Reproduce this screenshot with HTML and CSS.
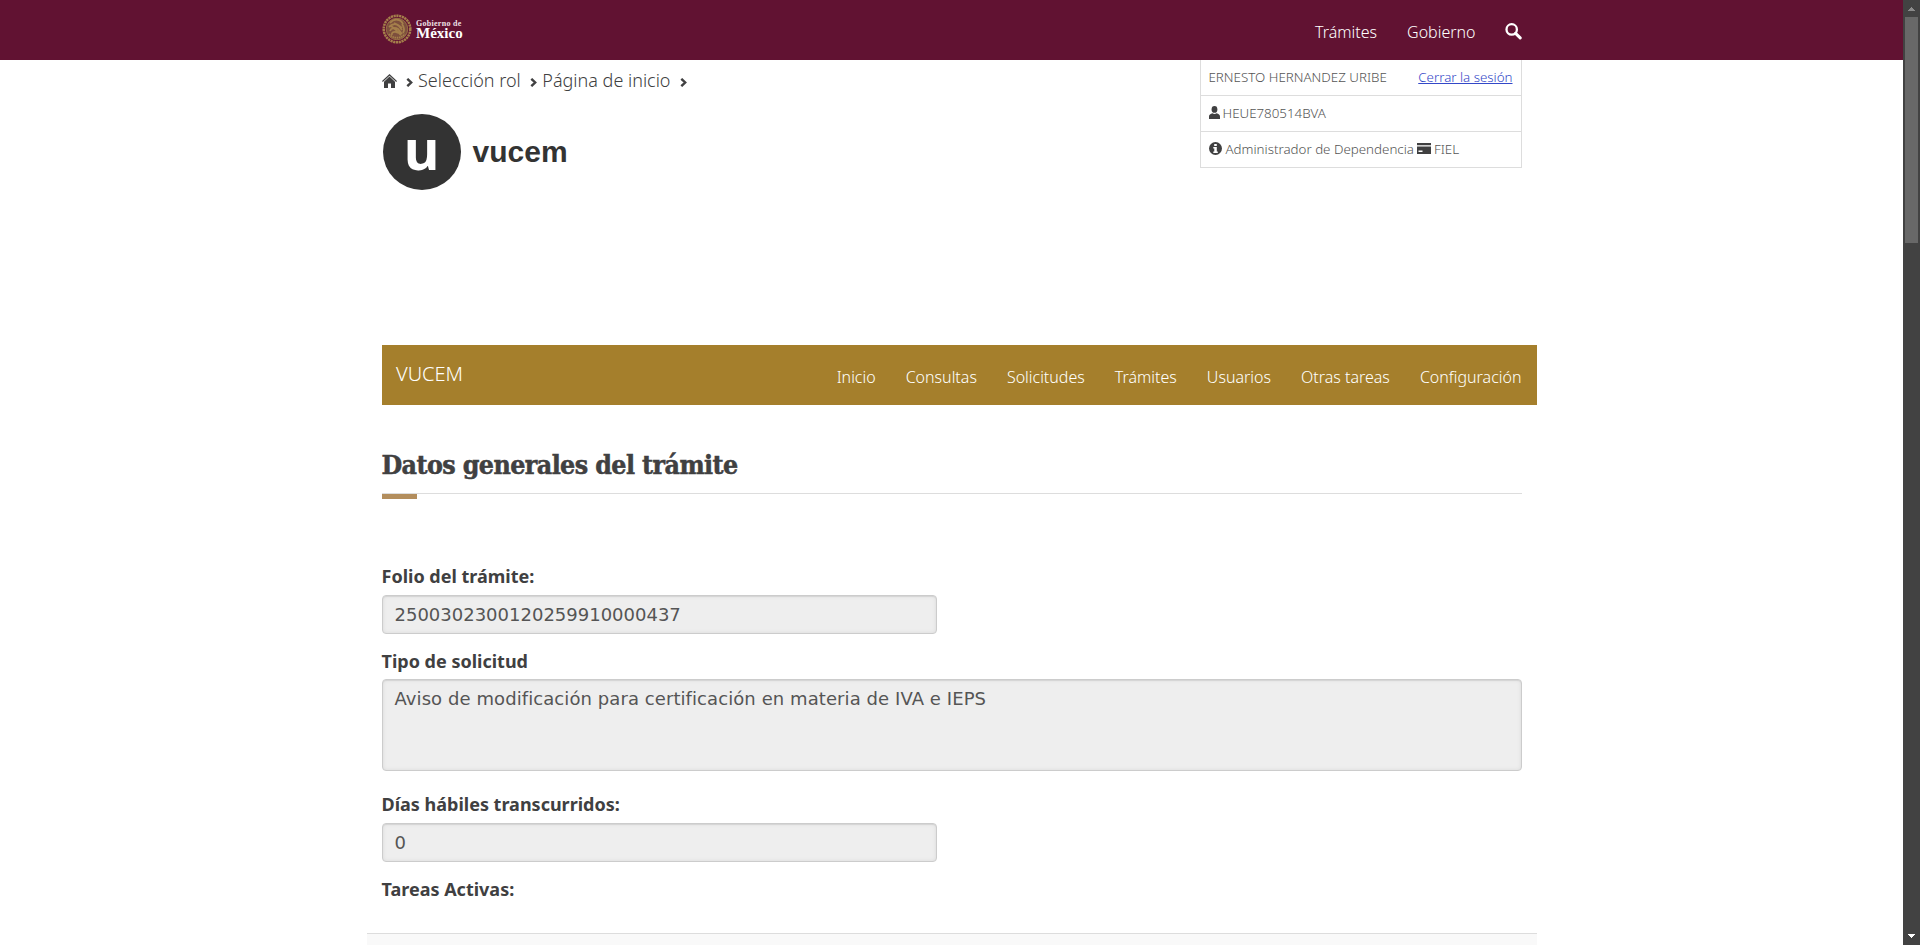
FILE: index.html
```html
<!DOCTYPE html>
<html lang="es">
<head>
<meta charset="utf-8">
<title>VUCEM</title>
<link rel="stylesheet" href="styles.css">
</head>
<body>
<div class="window">
<div class="page">
  <header class="topbar">
    <div class="container topbar-inner">
      <div class="gob">
        <svg class="crest" viewBox="0 0 30 30" fill="none" stroke="#a57f4b">
          <circle cx="15" cy="15" r="13.300" stroke-width="2.500" stroke-dasharray="2.200 .6"/>
          <circle cx="15" cy="15" r="10.800" fill="#7d4f3d" stroke-width=".7"/>
          <path d="M8 9c4-5 11-4 13 1M7 13c3-3 7-4 10-1l3 4M8 17c1-3 5-4 8-2l4 5M10 21c-1-3 3-4 6-2M12 9l4 2 4 3M9 12l5 4 5 5M20 10c2 3 3 6 1 9" stroke-width="1.800"/>
          <path d="M7 20c4 5 12 5 16 0" stroke-width="1.800" stroke-dasharray="1.500 .7"/>
        </svg>
        <div class="gob-text"><span class="gob-small">Gobierno de</span><span class="gob-big">México</span></div>
      </div>
      <nav class="topnav">
        <a class="tn1">Trámites</a><a class="tn2">Gobierno</a>
        <svg class="search" viewBox="0 0 17 17" fill="none" stroke="#fff"><circle cx="6.700" cy="6.400" r="5.200" stroke-width="2.300"/><path d="M10.600 10.400l4.600 4.500" stroke-width="3" stroke-linecap="round"/></svg>
      </nav>
    </div>
  </header>

  <main class="container">
    <div class="intro">
      <div class="left">
        <div class="crumbs">
          <svg class="home" viewBox="0 0 15 14" fill="#404041"><path d="M7.500 0L0 7l.8.9L7.500 1.700l6.700 6.200.8-.9z"/><path d="M7.500 2.600L2 7.700V14h4v-4.400h3V14h4V7.700z"/></svg>
          <svg class="chev" viewBox="0 0 7 9"><path d="M1.300 .8l3.900 3.700L1.300 8.200"/></svg>
          <a class="c1">Selección rol</a>
          <svg class="chev" viewBox="0 0 7 9"><path d="M1.300 .8l3.900 3.700L1.300 8.200"/></svg>
          <a class="c2">Página de inicio</a>
          <svg class="chev" viewBox="0 0 7 9"><path d="M1.300 .8l3.900 3.700L1.300 8.200"/></svg>
        </div>
        <div class="logo"><span class="disc"><span>u</span></span><span class="word">vucem</span></div>
      </div>
      <aside class="user">
        <div class="urow first"><span class="uname">ERNESTO HERNANDEZ URIBE</span><a class="logout">Cerrar la sesión</a></div>
        <div class="urow">
          <svg class="person" viewBox="0 0 11 13" fill="#404041"><ellipse cx="5.500" cy="3.400" rx="2.900" ry="3.400"/><path d="M0 13v-2.600C0 8.500 1.500 8 3.400 7.200c1.300 1 2.900 1 4.200 0C9.500 8 11 8.500 11 10.400V13z"/></svg>
          <span>HEUE780514BVA</span></div>
        <div class="urow">
          <svg class="info" viewBox="0 0 13 13"><circle cx="6.500" cy="6.500" r="6.500" fill="#404041"/><path d="M5.200 1.900h2.600v2H5.200zM4.300 5h3.500v4.600h1v1.500H4.300V9.600h1V6.500h-1z" fill="#fff"/></svg>
          <span class="admin">Administrador de Dependencia</span>
          <svg class="card" viewBox="0 0 14 11"><path d="M0 0h14v11H0z" fill="#404041"/><path d="M0 2.200h14v1.300H0zM1.500 7.500h4v1.500h-4z" fill="#fff"/></svg>
          <span>FIEL</span></div>
      </aside>
    </div>

    <nav class="menu">
      <span class="brand">VUCEM</span>
      <div class="links"><a>Inicio</a><a>Consultas</a><a>Solicitudes</a><a>Trámites</a><a>Usuarios</a><a>Otras tareas</a><a>Configuración</a></div>
    </nav>

    <h1 class="title"><span>Datos generales del trámite</span></h1>

    <form class="form">
      <label>Folio del trámite:</label>
      <div class="field">2500302300120259910000437</div>
      <label>Tipo de solicitud</label>
      <div class="field area">Aviso de modificación para certificación en materia de IVA e IEPS</div>
      <label>Días hábiles transcurridos:</label>
      <div class="field">0</div>
      <label>Tareas Activas:</label>
    </form>
    <div class="panel"></div>
  </main>
</div>
<div class="scrollbar">
  <svg class="arrow" viewBox="0 0 7 4" fill="#8a8a8a" shape-rendering="crispEdges"><path d="M0 4h7V3H6V2H5V1H4V0H3v1H2v1H1v1H0z"/></svg>
  <div class="thumb"></div>
  <svg class="arrow down" viewBox="0 0 7 4" fill="#fff" shape-rendering="crispEdges"><path d="M0 0h7v1H6v1H5v1H4v1H3V3H2V2H1V1H0z"/></svg>
</div>
</div>
</body>
</html>
```
FILE: styles.css
```css
* { box-sizing: border-box; }
body { margin: 0; background: #fff; color: #404041; font: 300 16px/24px "Noto Sans", "Open Sans", sans-serif; }
svg { display: block; flex: none; }
a, span { white-space: nowrap; }
.window { display: flex; height: 945px; overflow: hidden; }
.page { width: 1903px; height: 945px; overflow: hidden; }
.container { width: 1170px; margin: 0 auto; padding: 0 15px; }
.topbar { height: 60px; background: #611232; color: #fff; }
.topbar-inner { display: flex; justify-content: space-between; }
.gob { display: flex; padding-top: 14px; }
.crest { width: 30px; height: 30px; }
.gob-text { display: flex; flex-direction: column; margin: 5px 0 0 4.500px; font-family: "Liberation Serif", serif; }
.gob-small { font-size: 8px; line-height: 9px; font-weight: 700; letter-spacing: .28px; color: #eee0e5; }
.gob-big { font-size: 15px; line-height: 10px; font-weight: 700; }
.topnav { display: flex; padding-top: 20px; }
.tn2 { margin-left: 30px; }
.search { width: 17px; height: 17px; margin: 3px 0 0 29px; }
.intro { display: flex; justify-content: space-between; height: 285px; }
.crumbs { display: flex; height: 42px; padding-top: 7px; font-size: 18px; line-height: 27px; }
.home { width: 15px; height: 14px; margin-top: 7px; }
.chev { width: 7px; height: 9px; margin: 11px 5px 0 9.500px; fill: none; stroke: #404041; stroke-width: 2.400; }
.logo { display: flex; align-items: center; margin: 11px 0 0 1px; height: 77px; color: #333; font-family: "Liberation Sans", sans-serif; font-weight: 700; }
.disc { display: flex; justify-content: center; width: 78px; height: 76px; border-radius: 50%; background: #333; color: #fff; font: 700 55px/70px "Open Sans", "Noto Sans", sans-serif; }
.word { margin-left: 12px; font-size: 30px; line-height: 36px; }
.user { width: 322px; height: 108px; border: 1px solid #ddd; border-top: 0; font-size: 13.330px; line-height: 20px; color: #545454; }
.urow { display: flex; height: 36px; padding: 7px 8px 0; border-top: 1px solid #ddd; }
.urow.first { border-top: 0; height: 35px; justify-content: space-between; }
.logout { color: #3348c8; text-decoration: underline; }
.person { width: 11px; height: 13px; margin: 3px 3px 0 0; }
.info { width: 13px; height: 13px; margin: 3px 4px 0 0; }
.card { width: 14px; height: 11px; margin: 4px 3px 0; }
.menu { display: flex; justify-content: space-between; height: 60px; margin-right: -15px; padding: 0 15px 0 14.500px; background: #a57f2c; color: #fff; }
.brand { font-size: 20px; line-height: 58px; }
.links { display: flex; gap: 30px; line-height: 64px; }
.title { display: flex; height: 89px; margin: 0; padding-top: 44px; border-bottom: 1px solid #ddd; font: 700 26.500px/32px "DejaVu Serif Condensed", "DejaVu Serif", serif; letter-spacing: -.58px; -webkit-text-stroke: .5px #404041; position: relative; }
.title::after { content: ""; position: absolute; left: 0; top: 89px; width: 35px; height: 5px; background: #b38e5d; }
.form { padding-top: 71px; height: 439px; }
.form label { display: block; height: 30px; font-size: 18px; line-height: 22px; font-weight: 700; }
.field { width: 555px; height: 39px; margin-bottom: 16px; padding: 5px 12px; border: 1px solid #ccc; border-radius: 4px; background: #eee; box-shadow: inset 0 1px 1px rgba(0,0,0,.075), inset 0 0 4px rgba(0,0,0,.08); color: #555; font: 400 18px/27px "DejaVu Sans", sans-serif; }
.field.area { width: 100%; height: 92px; margin: -1px 0 22px; letter-spacing: .08px; }
.panel { height: 20px; margin: 0 -15px; border-top: 1px solid #ddd; background: #f9f9f9; }
.scrollbar { display: flex; flex-direction: column; align-items: center; width: 17px; height: 945px; background: #424242; }
.arrow { width: 7px; height: 4px; margin: 7px 0 6px; }
.thumb { width: 13px; height: 226px; background: #686868; }
.arrow.down { margin: auto 0 7px; }
```
